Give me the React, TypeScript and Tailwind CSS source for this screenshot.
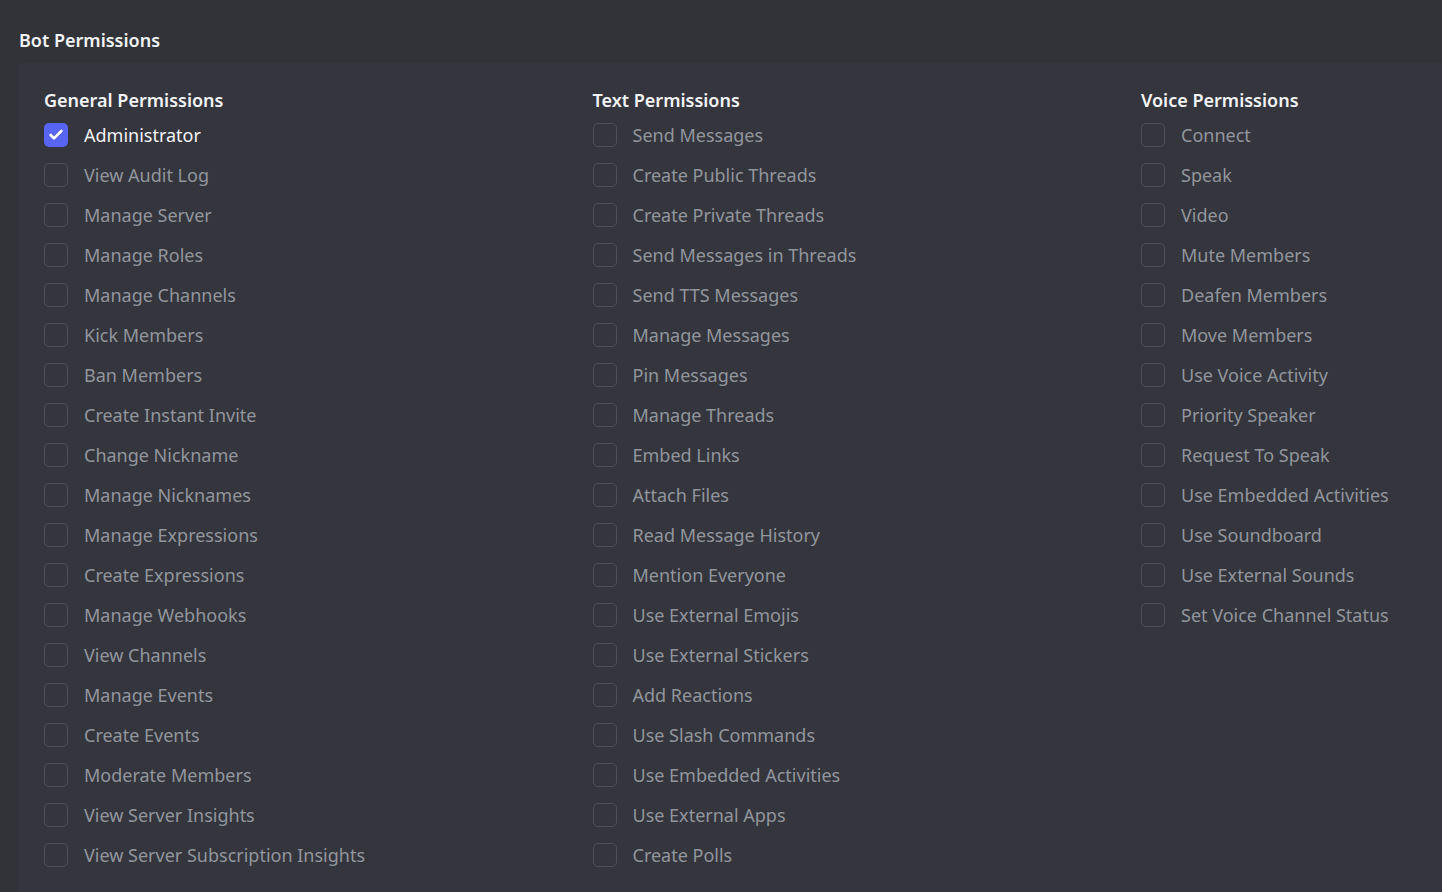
import { Check } from 'lucide-react';

type Permission = { name: string; checked?: boolean };

const columns: { title: string; items: Permission[] }[] = [
  {
    title: 'General Permissions',
    items: [
      { name: 'Administrator', checked: true },
      { name: 'View Audit Log' },
      { name: 'Manage Server' },
      { name: 'Manage Roles' },
      { name: 'Manage Channels' },
      { name: 'Kick Members' },
      { name: 'Ban Members' },
      { name: 'Create Instant Invite' },
      { name: 'Change Nickname' },
      { name: 'Manage Nicknames' },
      { name: 'Manage Expressions' },
      { name: 'Create Expressions' },
      { name: 'Manage Webhooks' },
      { name: 'View Channels' },
      { name: 'Manage Events' },
      { name: 'Create Events' },
      { name: 'Moderate Members' },
      { name: 'View Server Insights' },
      { name: 'View Server Subscription Insights' },
    ],
  },
  {
    title: 'Text Permissions',
    items: [
      { name: 'Send Messages' },
      { name: 'Create Public Threads' },
      { name: 'Create Private Threads' },
      { name: 'Send Messages in Threads' },
      { name: 'Send TTS Messages' },
      { name: 'Manage Messages' },
      { name: 'Pin Messages' },
      { name: 'Manage Threads' },
      { name: 'Embed Links' },
      { name: 'Attach Files' },
      { name: 'Read Message History' },
      { name: 'Mention Everyone' },
      { name: 'Use External Emojis' },
      { name: 'Use External Stickers' },
      { name: 'Add Reactions' },
      { name: 'Use Slash Commands' },
      { name: 'Use Embedded Activities' },
      { name: 'Use External Apps' },
      { name: 'Create Polls' },
    ],
  },
  {
    title: 'Voice Permissions',
    items: [
      { name: 'Connect' },
      { name: 'Speak' },
      { name: 'Video' },
      { name: 'Mute Members' },
      { name: 'Deafen Members' },
      { name: 'Move Members' },
      { name: 'Use Voice Activity' },
      { name: 'Priority Speaker' },
      { name: 'Request To Speak' },
      { name: 'Use Embedded Activities' },
      { name: 'Use Soundboard' },
      { name: 'Use External Sounds' },
      { name: 'Set Voice Channel Status' },
    ],
  },
];

const PermissionRow = ({ item }: { item: Permission }) => (
  <label className="flex h-6 items-center gap-4 cursor-pointer">
    {item.checked ? (
      <span className="flex h-6 w-6 shrink-0 items-center justify-center rounded-[5px] bg-[#5865f2]">
        <Check size={16} strokeWidth={4} className="text-white" />
      </span>
    ) : (
      <span className="h-6 w-6 shrink-0 rounded-[5px] border border-[#4e4f58]" />
    )}
    <span
      className={`text-[18px] leading-6 whitespace-nowrap ${
        item.checked ? 'text-[#f2f3f5]' : 'text-[#92959c]'
      }`}
    >
      {item.name}
    </span>
  </label>
);

export default function App() {
  return (
    <div
      className="h-screen w-full overflow-hidden bg-[#313338] pl-[19px] pt-7"
      style={{ fontFamily: '"Noto Sans", "Open Sans", sans-serif' }}
    >
      <h2 className="mb-[11px] text-[18px] font-semibold leading-6 text-[#f2f3f5]">Bot Permissions</h2>

      <div className="h-[900px] w-[1700px] bg-[#35353e] pl-[25px] pt-[25px]">
        <div className="grid grid-cols-[548.5px_548.5px_548.5px]">
          {columns.map((col) => (
            <div key={col.title}>
              <h3 className="mb-[11px] text-[18px] font-semibold leading-6 text-[#f2f3f5]">{col.title}</h3>
              <div className="flex flex-col gap-4">
                {col.items.map((item) => (
                  <PermissionRow key={item.name} item={item} />
                ))}
              </div>
            </div>
          ))}
        </div>
      </div>
    </div>
  );
}
